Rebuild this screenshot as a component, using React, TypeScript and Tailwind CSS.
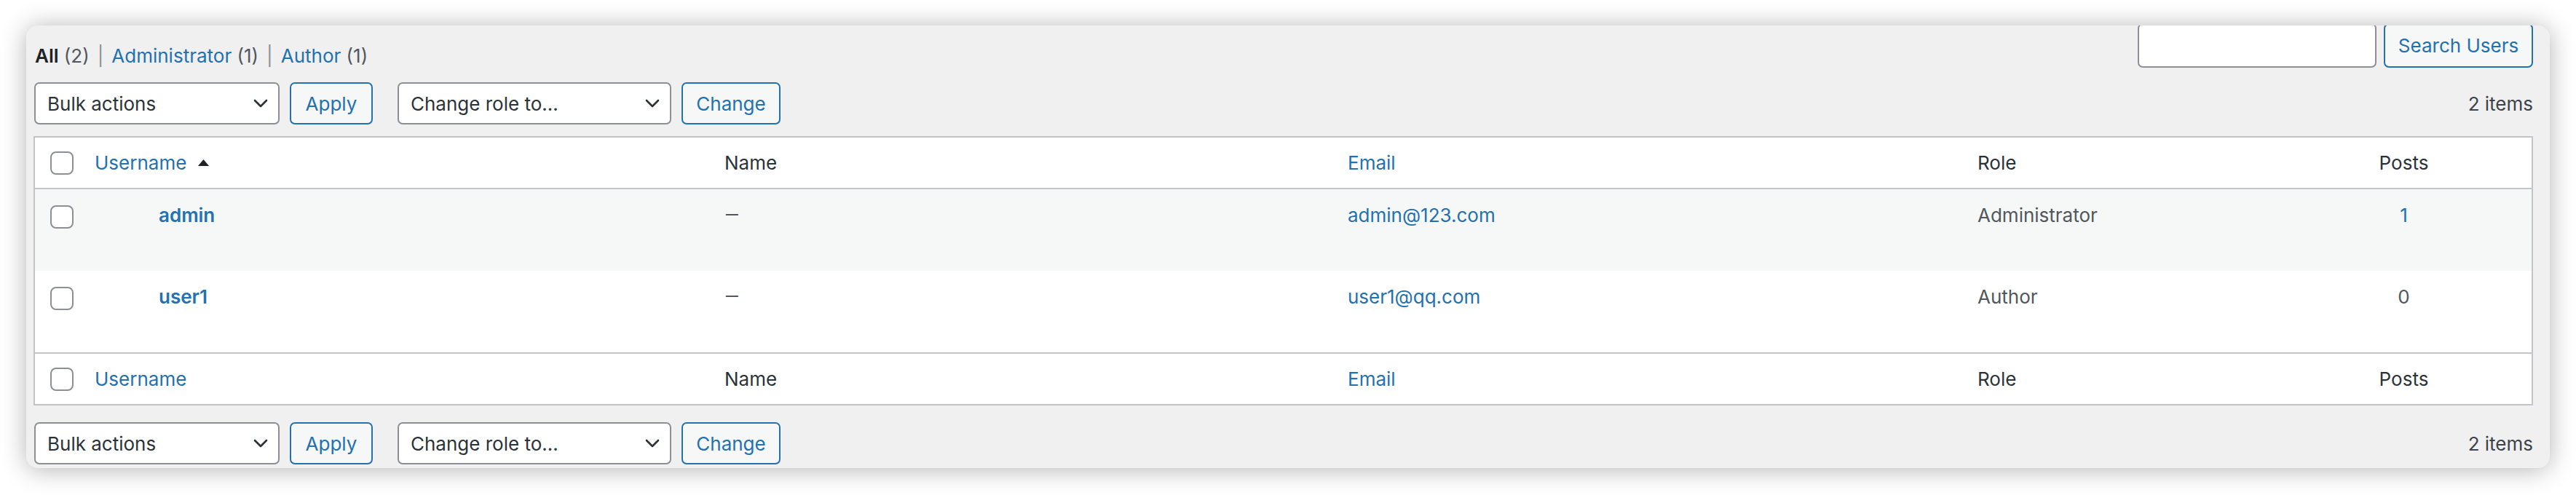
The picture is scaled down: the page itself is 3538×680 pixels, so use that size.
const font = { fontFamily: 'Inter, "Noto Sans", sans-serif' };

const Chevron = () => (
  <svg width="20" height="12" viewBox="0 0 20 12" fill="none" stroke="#2c3338" strokeWidth="2.6" strokeLinecap="round" strokeLinejoin="round">
    <path d="M2 2l8 8 8-8" />
  </svg>
);

const SortUp = () => (
  <svg width="15" height="9" viewBox="0 0 15 9" className="ml-[16px]">
    <path d="M7.5 0L15 9H0z" fill="#1d2327" />
  </svg>
);

const Checkbox = () => (
  <span className="block w-[32px] h-[32px] rounded-[8px] border-2 border-[#8c8f94] bg-white" />
);

function Select({ label, width }: { label: string; width: string }) {
  return (
    <div className={`${width} h-[58px] flex items-center justify-between pl-[16px] pr-[14px] bg-white border-2 border-[#8c8f94] rounded-[7px] text-[26px] text-[#2c3338]`}>
      <span>{label}</span>
      <Chevron />
    </div>
  );
}

function Button({ label, width }: { label: string; width: string }) {
  return (
    <button className={`${width} h-[58px] flex items-center justify-center bg-[#f6f7f7] border-2 border-[#2271b1] rounded-[7px] text-[26px] text-[#2271b1]`}>
      {label}
    </button>
  );
}

function TableNav() {
  return (
    <div className="flex items-center h-[58px] pl-[1px]">
      <Select label="Bulk actions" width="w-[337px]" />
      <div className="ml-[14px]"><Button label="Apply" width="w-[114px]" /></div>
      <div className="ml-[34px]"><Select label="Change role to…" width="w-[376px]" /></div>
      <div className="ml-[14px]"><Button label="Change" width="w-[136px]" /></div>
      <span className="ml-auto text-[26px] text-[#3c434a]">2 items</span>
    </div>
  );
}

const cols = 'grid grid-cols-[62px_865px_856px_865px_430px_1fr]';

function HeadRow({ sorted, top }: { sorted?: boolean; top?: boolean }) {
  return (
    <div className={`${cols} h-[71px] items-center bg-white text-[26px] text-[#2c3338] ${top ? 'border-b-2' : 'border-t-2'} border-[#c3c4c7]`}>
      <div className="pl-[21px]"><Checkbox /></div>
      <div className="pl-[20px] flex items-center text-[#2271b1]">
        Username{sorted && <SortUp />}
      </div>
      <div className="pl-[20px]">Name</div>
      <div className="pl-[20px] text-[#2271b1]">Email</div>
      <div className="pl-[20px]">Role</div>
      <div className="text-center">Posts</div>
    </div>
  );
}

function UserRow({ user, email, role, posts, striped }: { user: string; email: string; role: string; posts: number; striped?: boolean }) {
  return (
    <div className={`${cols} h-[112px] items-start text-[26px] leading-[39px] text-[#50575e] ${striped ? 'bg-[#f6f7f7]' : 'bg-white'}`}>
      <div className="pl-[21px] pt-[22px]"><Checkbox /></div>
      <div className="pl-[108px] pt-[16px] font-semibold text-[#2271b1]">{user}</div>
      <div className="pl-[20px] pt-[16px]" style={{ fontFamily: 'Roboto, sans-serif' }}>—</div>
      <div className="pl-[20px] pt-[16px] text-[#2271b1]">{email}</div>
      <div className="pl-[20px] pt-[16px]">{role}</div>
      <div className={`pt-[16px] text-center ${posts > 0 ? 'text-[#2271b1]' : ''}`}>{posts}</div>
    </div>
  );
}

export default function App() {
  return (
    <div className="w-[3538px] h-[680px] bg-white pt-[35px] pl-[36px]" style={font}>
      <div className="w-[3466px] h-[608px] bg-[#f0f0f1] rounded-[16px] overflow-hidden shadow-[0_2px_34px_rgba(0,0,0,0.3)] pl-[10px] pr-[23px]">
        <div className="flex justify-between items-start h-[58px] -mt-[3px]">
          <div className="mt-[25px] pl-[2px] text-[26px] leading-[39px] text-[#50575e]">
            <span className="font-semibold text-[#1d2327]">All</span> (2)
            <span className="text-[#8c8f94] mx-[11px]">|</span>
            <span className="text-[#2271b1]">Administrator</span> (1)
            <span className="text-[#8c8f94] mx-[11px]">|</span>
            <span className="text-[#2271b1]">Author</span> (1)
          </div>
          <div className="flex gap-[10px]">
            <div className="w-[328px] h-[61px] bg-white border-2 border-[#8c8f94] rounded-[7px]" />
            <button className="w-[205px] h-[61px] bg-[#f6f7f7] border-2 border-[#2271b1] rounded-[7px] text-[26px] text-[#2271b1]">
              Search Users
            </button>
          </div>
        </div>
        <div className="mt-[23px]">
          <TableNav />
        </div>
        <div className="mt-[16px] border-2 border-[#c3c4c7] bg-white">
          <HeadRow sorted top />
          <UserRow user="admin" email="admin@123.com" role="Administrator" posts={1} striped />
          <UserRow user="user1" email="user1@qq.com" role="Author" posts={0} />
          <HeadRow />
        </div>
        <div className="mt-[23px]">
          <TableNav />
        </div>
      </div>
    </div>
  );
}
